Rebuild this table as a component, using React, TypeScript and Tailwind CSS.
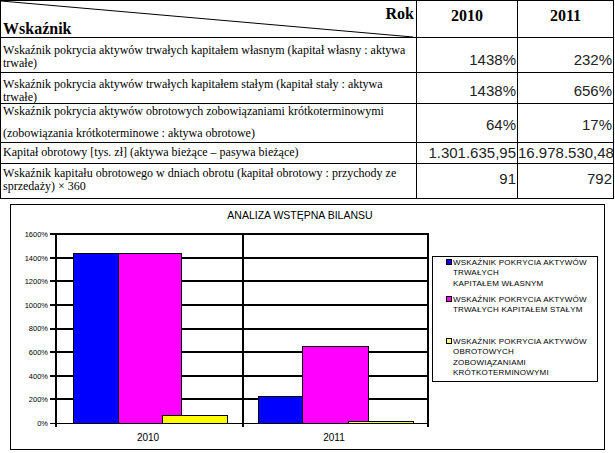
import React from "react";

const Y = (v: number) => 423 - (v / 200) * 23.6;

function Chart() {
  const grid = [200, 400, 600, 800, 1000, 1200, 1400, 1600];
  const labels = [0, 200, 400, 600, 800, 1000, 1200, 1400, 1600];
  const bars = [
    { x1: 73, x2: 118, v: 1438, c: "#0000ff" },
    { x1: 118, x2: 181, v: 1438, c: "#ff00ff" },
    { x1: 162, x2: 227, v: 64, c: "#ffff00" },
    { x1: 258, x2: 302, v: 232, c: "#0000ff" },
    { x1: 302, x2: 368, v: 656, c: "#ff00ff" },
    { x1: 348, x2: 413, v: 17, c: "#ffff40" },
  ];
  const legend = [
    { y: 262, c: "#0000ff", lines: ["WSKAŹNIK POKRYCIA AKTYWÓW", "TRWAŁYCH", "KAPITAŁEM WŁASNYM"] },
    { y: 299, c: "#ff00ff", lines: ["WSKAŹNIK POKRYCIA AKTYWÓW", "TRWAŁYCH KAPITAŁEM STAŁYM"] },
    { y: 341, c: "#ffff80", lines: ["WSKAŹNIK POKRYCIA AKTYWÓW", "OBROTOWYCH", "ZOBOWIĄZANIAMI", "KRÓTKOTERMINOWYMI"] },
  ];
  return (
    <svg width={593} height={244} className="block font-['Liberation_Sans',Arial,sans-serif]">
      <g transform="translate(-11,-205)">
        <rect x={11} y={205} width={593} height={244} fill="#ffffff" />
        <text x={300} y={219} fontSize={10.5} textAnchor="middle" fill="#000">
          ANALIZA WSTĘPNA BILANSU
        </text>
        {grid.map((v) => (
          <line key={v} x1={50} x2={429} y1={Math.round(Y(v))} y2={Math.round(Y(v))} stroke="#000" strokeWidth={2} />
        ))}
        <line x1={50} x2={429} y1={423.5} y2={423.5} stroke="#000" strokeWidth={1} />
        <line x1={56} x2={56} y1={233} y2={427} stroke="#000" strokeWidth={2} />
        <line x1={243} x2={243} y1={233} y2={427} stroke="#000" strokeWidth={2} />
        <line x1={428} x2={428} y1={233} y2={427} stroke="#000" strokeWidth={2} />
        {labels.map((v) => (
          <text key={v} x={48} y={Y(v) + 2.7} fontSize={7.5} textAnchor="end" fill="#000">
            {v}%
          </text>
        ))}
        {bars.map((b, i) => (
          <rect
            key={i}
            x={b.x1 + 0.5}
            y={Math.round(Y(b.v)) + 0.5}
            width={b.x2 - b.x1}
            height={423 - Math.round(Y(b.v))}
            fill={b.c}
            stroke="#000"
            strokeWidth={1}
          />
        ))}
        <text x={148} y={441} fontSize={10} textAnchor="middle" fill="#000">2010</text>
        <text x={334} y={441} fontSize={10} textAnchor="middle" fill="#000">2011</text>
        <rect x={432.5} y={256.5} width={165} height={125} fill="#fff" stroke="#000" strokeWidth={1} />
        {legend.map((l, i) => (
          <g key={i}>
            <rect x={446.5} y={l.y - 2.5} width={5} height={5} fill={l.c} stroke="#000" strokeWidth={1} />
            {l.lines.map((t, j) => (
              <text key={j} x={453} y={l.y + 3 + j * 10.3} fontSize={8} letterSpacing={0.2} fill="#000">
                {t}
              </text>
            ))}
          </g>
        ))}
      </g>
    </svg>
  );
}

export default function App() {
  const cell = "border-r border-b border-black";
  const ns = "font-['Liberation_Sans',Arial,sans-serif]";
  const num = `${ns} text-right text-[15px] leading-[17px] text-[#222] pr-[1px]`;
  const txt = "font-['Liberation_Serif','Times_New_Roman',serif] text-[12px] leading-[13px] text-black pl-[2px] whitespace-nowrap";
  const hd = "font-['Liberation_Serif','Times_New_Roman',serif] text-[16px] font-bold leading-[18px]";
  return (
    <div className="w-[615px] h-[453px] bg-white overflow-hidden">
      <div className="grid grid-cols-[416px_101px_96px] border-l border-t border-black w-[614px]">
        {/* header */}
        <div className={`${cell} h-[37px] relative`}>
          <svg className="absolute inset-0 w-full h-full" preserveAspectRatio="none" viewBox="0 0 415 36">
            <line x1={0} y1={0} x2={412} y2={36} stroke="#000" strokeWidth={1} />
          </svg>
          <div className={`absolute right-[2px] top-[4px] ${hd}`}>Rok</div>
          <div className={`absolute left-[2px] top-[19px] ${hd}`}>Wskaźnik</div>
        </div>
        <div className={`${cell} h-[37px] flex justify-center pt-[6px] ${hd}`}>2010</div>
        <div className={`${cell} h-[37px] flex justify-center pt-[6px] ${hd}`}>2011</div>

        {/* row 1 */}
        <div className={`${cell} h-[35px] pt-[6px] ${txt}`}>
          Wskaźnik pokrycia aktywów trwałych kapitałem własnym (kapitał własny : aktywa
          <br />
          trwałe)
        </div>
        <div className={`${cell} h-[35px] pt-[13px]`}><div className={num}>1438%</div></div>
        <div className={`${cell} h-[35px] pt-[13px]`}><div className={num}>232%</div></div>

        {/* row 2 */}
        <div className={`${cell} h-[31px] pt-[5px] ${txt}`}>
          Wskaźnik pokrycia aktywów trwałych kapitałem stałym (kapitał stały : aktywa
          <br />
          trwałe)
        </div>
        <div className={`${cell} h-[31px] pt-[9px]`}><div className={num}>1438%</div></div>
        <div className={`${cell} h-[31px] pt-[9px]`}><div className={num}>656%</div></div>

        {/* row 3 */}
        <div className={`${cell} h-[39px] pt-[1px] ${txt}`}>
          <div>Wskaźnik pokrycia aktywów obrotowych zobowiązaniami krótkoterminowymi</div>
          <div className="mt-[9px]">(zobowiązania krótkoterminowe : aktywa obrotowe)</div>
        </div>
        <div className={`${cell} h-[39px] pt-[12px]`}><div className={num}>64%</div></div>
        <div className={`${cell} h-[39px] pt-[12px]`}><div className={num}>17%</div></div>

        {/* row 4 */}
        <div className={`${cell} h-[21px] pt-[3px] ${txt}`}>
          Kapitał obrotowy [tys. zł] (aktywa bieżące – pasywa bieżące)
        </div>
        <div className={`${cell} h-[21px] pt-[1px]`}><div className={`${num} pr-0`}>1.301.635,95</div></div>
        <div className={`${cell} h-[21px] pt-[1px]`}><div className={`${num} pr-0 whitespace-nowrap`}>16.978.530,48</div></div>

        {/* row 5 */}
        <div className={`${cell} h-[35px] pt-[3px] ${txt}`}>
          Wskaźnik kapitału obrotowego w dniach obrotu (kapitał obrotowy : przychody ze
          <br />
          sprzedaży) × 360
        </div>
        <div className={`${cell} h-[35px] pt-[6px]`}><div className={num}>91</div></div>
        <div className={`${cell} h-[35px] pt-[6px]`}><div className={num}>792</div></div>
      </div>

      <div className="ml-[10px] mt-[5px] w-[595px] h-[246px] border border-black">
        <Chart />
      </div>
    </div>
  );
}
